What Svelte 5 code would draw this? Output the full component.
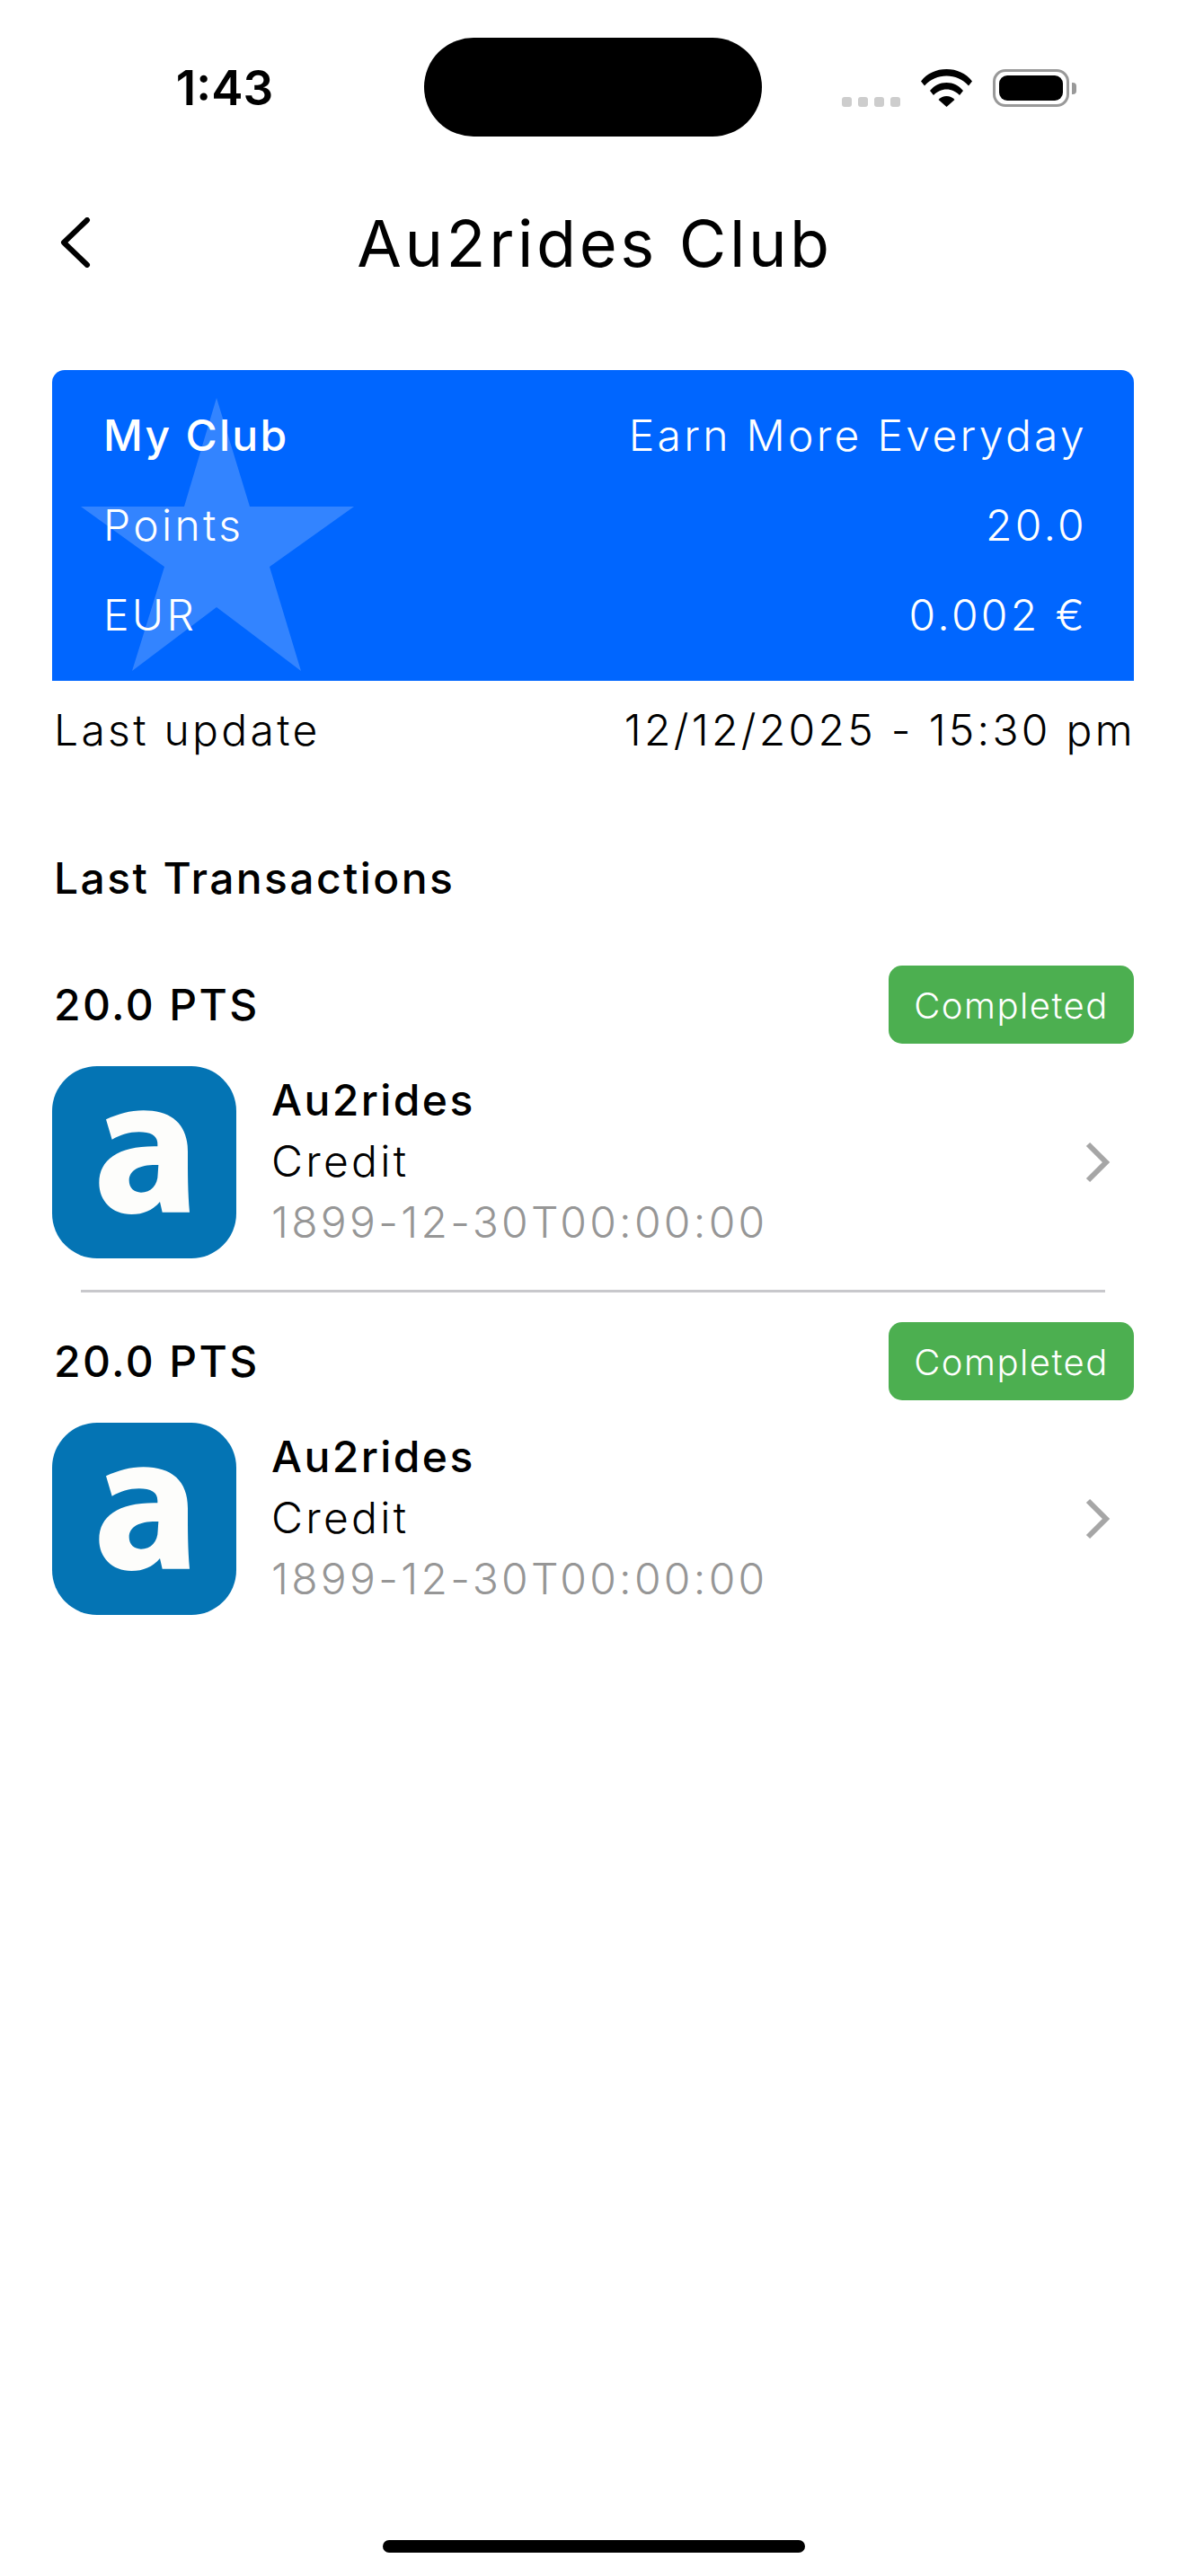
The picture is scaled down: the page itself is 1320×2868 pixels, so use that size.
<script>
	const balances = [
		{ label: 'My Club', value: 'Earn More Everyday', strong: true },
		{ label: 'Points', value: '20.0' },
		{ label: 'EUR', value: '0.002 €' }
	];

	const transactions = [
		{ id: 1, points: '20.0 PTS', status: 'Completed', name: 'Au2rides', kind: 'Credit', date: '1899-12-30T00:00:00' },
		{ id: 2, points: '20.0 PTS', status: 'Completed', name: 'Au2rides', kind: 'Credit', date: '1899-12-30T00:00:00' }
	];
</script>

<div class="screen">
	<div class="status-bar">
		<span class="time">1:43</span>
		<div class="island"></div>
		<div class="status-icons">
			<div class="dots"><i></i><i></i><i></i><i></i></div>
			<svg class="wifi" viewBox="0 0 57 42" width="57" height="42">
				<path d="M0 13.5C7 4.5 17 0 28.5 0S50 4.500 57 13.500L53 18.500C46 11 38 7.500 28.500 7.500S11 11 4 18.500Z" />
				<path d="M10 24C15 18 21 15 28.500 15S42 18 47 24L43 29C39 25 34 22.500 28.500 22.500S18 25 14 29Z" />
				<path d="M19.500 34C22 31.500 25 30 28.500 30S35 31.500 37.500 34L28.500 42Z" />
			</svg>
			<div class="battery"><div class="battery-fill"></div></div>
			<div class="battery-cap"></div>
		</div>
	</div>

	<header class="nav">
		<svg class="back" viewBox="0 0 34 56" width="34" height="56">
			<path d="M30 3L4 28L30 53" />
		</svg>
		<h1>Au2rides Club</h1>
	</header>

	<section class="club-card">
		<svg class="star" viewBox="0 0 304 304" width="304" height="304">
			<polygon points="151,0 188,121 304,121 210,188 245,304 151,233 57,304 93,188 0,121 115,121" />
		</svg>
		{#each balances as row}
			<div class="club-row">
				<span class:strong={row.strong}>{row.label}</span>
				<span>{row.value}</span>
			</div>
		{/each}
	</section>

	<div class="updated">
		<span>Last update</span>
		<span>12/12/2025 - 15:30 pm</span>
	</div>

	<h2>Last Transactions</h2>

	<div class="transactions">
		{#each transactions as tx, i}
			{#if i > 0}
				<div class="divider"></div>
			{/if}
			<article class="tx">
				<div class="tx-head">
					<span class="tx-points">{tx.points}</span>
					<span class="badge">{tx.status}</span>
				</div>
				<div class="tx-body">
					<svg class="logo" viewBox="175 440 615 642" width="205" height="214">
						<rect x="175" y="440" width="615" height="642" rx="150" fill="#0474b4" />
						<path
							fill="#fdfdfb"
							fill-rule="evenodd"
							d="M355 618C395 600 435 588 480 588C575 588 628 635 628 725C628 800 628 860 634 928L543 928L535 893C510 922 480 935 440 935C375 935 332 890 332 830C332 750 400 705 527 708L527 700C527 672 505 660 465 660C432 660 402 670 375 685ZM530 770C470 768 432 785 432 822C432 846 448 862 472 862C505 862 528 838 528 800Z"
						/>
					</svg>
					<div class="tx-text">
						<span class="tx-name">{tx.name}</span>
						<span class="tx-kind">{tx.kind}</span>
						<span class="tx-date">{tx.date}</span>
					</div>
					<svg class="chevron" viewBox="0 0 30 48" width="30" height="48">
						<path d="M4 4L24 24L4 44" />
					</svg>
				</div>
			</article>
		{/each}
	</div>

	<div class="home-indicator"></div>
</div>

<style>
	:global(body) {
		margin: 0;
		background: #fff;
	}

	.screen {
		width: 1320px;
		height: 2868px;
		display: flex;
		flex-direction: column;
		font-family: Inter, 'Liberation Sans', sans-serif;
		color: #000;
		overflow: hidden;
	}

	.status-bar {
		display: grid;
		grid-template-columns: 472px 376px 1fr;
		align-items: center;
		height: 110px;
		margin-top: 42px;
	}

	.time {
		justify-self: center;
		margin-left: 28px;
		margin-top: 2px;
		font-size: 53px;
		font-weight: 600;
		font-family: Inter, sans-serif;
	}

	.island {
		height: 110px;
		border-radius: 55px;
		background: #000;
	}

	.status-icons {
		display: flex;
		align-items: flex-end;
		height: 42px;
		margin-left: 89px;
		margin-top: 2px;
	}

	.dots {
		display: flex;
		gap: 7px;
		margin-right: 23px;
	}

	.dots i {
		width: 11px;
		height: 11px;
		border-radius: 3px;
		background: #cdcdcd;
	}

	.wifi {
		fill: #000;
		margin-right: 23px;
	}

	.battery {
		box-sizing: border-box;
		width: 85px;
		height: 42px;
		padding: 4px;
		border: 3px solid #999;
		border-radius: 14px;
	}

	.battery-fill {
		height: 100%;
		border-radius: 9px;
		background: #000;
	}

	.battery-cap {
		width: 5px;
		height: 13px;
		margin: 0 0 14px 3px;
		border-radius: 0 4px 4px 0;
		background: #999;
	}

	.nav {
		position: relative;
		display: flex;
		justify-content: center;
		align-items: center;
		height: 116px;
		margin-top: 60px;
		margin-bottom: 84px;
	}

	.back {
		position: absolute;
		left: 67px;
		top: 30px;
		fill: none;
		stroke: #000;
		stroke-width: 6;
		stroke-linecap: round;
		stroke-linejoin: round;
	}

	h1 {
		margin: 0 0 0 4px;
		font-size: 72px;
		font-weight: 400;
		letter-spacing: 3.6px;
	}

	.club-card {
		position: relative;
		box-sizing: border-box;
		height: 346px;
		margin: 0 58px;
		padding: 22px 52px 0 57px;
		border-radius: 14px 14px 0 0;
		background: #0066ff;
		color: #fff;
		overflow: hidden;
	}

	.star {
		position: absolute;
		left: 32px;
		top: 31px;
		fill: #fff;
		fill-opacity: 0.2;
	}

	.club-row {
		position: relative;
		display: flex;
		justify-content: space-between;
		align-items: center;
		height: 100px;
		font-size: 48px;
		font-weight: 300;
		letter-spacing: 3.3px;
	}

	.club-row .strong {
		font-weight: 500;
		letter-spacing: 2.3px;
	}

	.updated {
		display: flex;
		justify-content: space-between;
		align-items: center;
		height: 60px;
		margin: 24px 56px 0 60px;
		font-size: 48px;
		font-weight: 300;
		letter-spacing: 3.3px;
	}

	h2 {
		margin: 106px 0 0 60px;
		font-size: 48px;
		font-weight: 500;
		line-height: 60px;
		letter-spacing: 2.4px;
	}

	.transactions {
		display: flex;
		flex-direction: column;
		margin-top: 67px;
	}

	.tx {
		display: flex;
		flex-direction: column;
		margin: 0 58px;
	}

	.tx-head {
		display: flex;
		justify-content: space-between;
		align-items: center;
		height: 87px;
		padding-left: 2px;
	}

	.tx-points {
		font-size: 48px;
		font-weight: 500;
		letter-spacing: 2.4px;
	}

	.badge {
		box-sizing: border-box;
		width: 273px;
		height: 87px;
		border-radius: 15px;
		background: #4caf50;
		color: #fff;
		font-size: 40px;
		font-weight: 300;
		line-height: 89px;
		letter-spacing: 1.5px;
		text-align: center;
	}

	.tx-body {
		display: flex;
		align-items: center;
		margin-top: 25px;
	}

	.logo {
		flex: none;
	}

	.tx-text {
		display: flex;
		flex-direction: column;
		flex: 1;
		margin-left: 39px;
		margin-top: -2px;
		font-size: 48px;
		font-weight: 300;
		line-height: 68px;
		letter-spacing: 3.3px;
	}

	.tx-name {
		font-weight: 500;
		letter-spacing: 2.4px;
	}

	.tx-date {
		color: #969696;
	}

	.chevron {
		flex: none;
		margin-right: 25px;
		fill: none;
		stroke: #a6a6a6;
		stroke-width: 6;
	}

	.divider {
		height: 3px;
		margin: 35px 90px 33px;
		background: #c8c8cc;
	}

	.home-indicator {
		position: absolute;
		left: 426px;
		top: 2828px;
		width: 470px;
		height: 14px;
		border-radius: 7px;
		background: #000;
	}
</style>
